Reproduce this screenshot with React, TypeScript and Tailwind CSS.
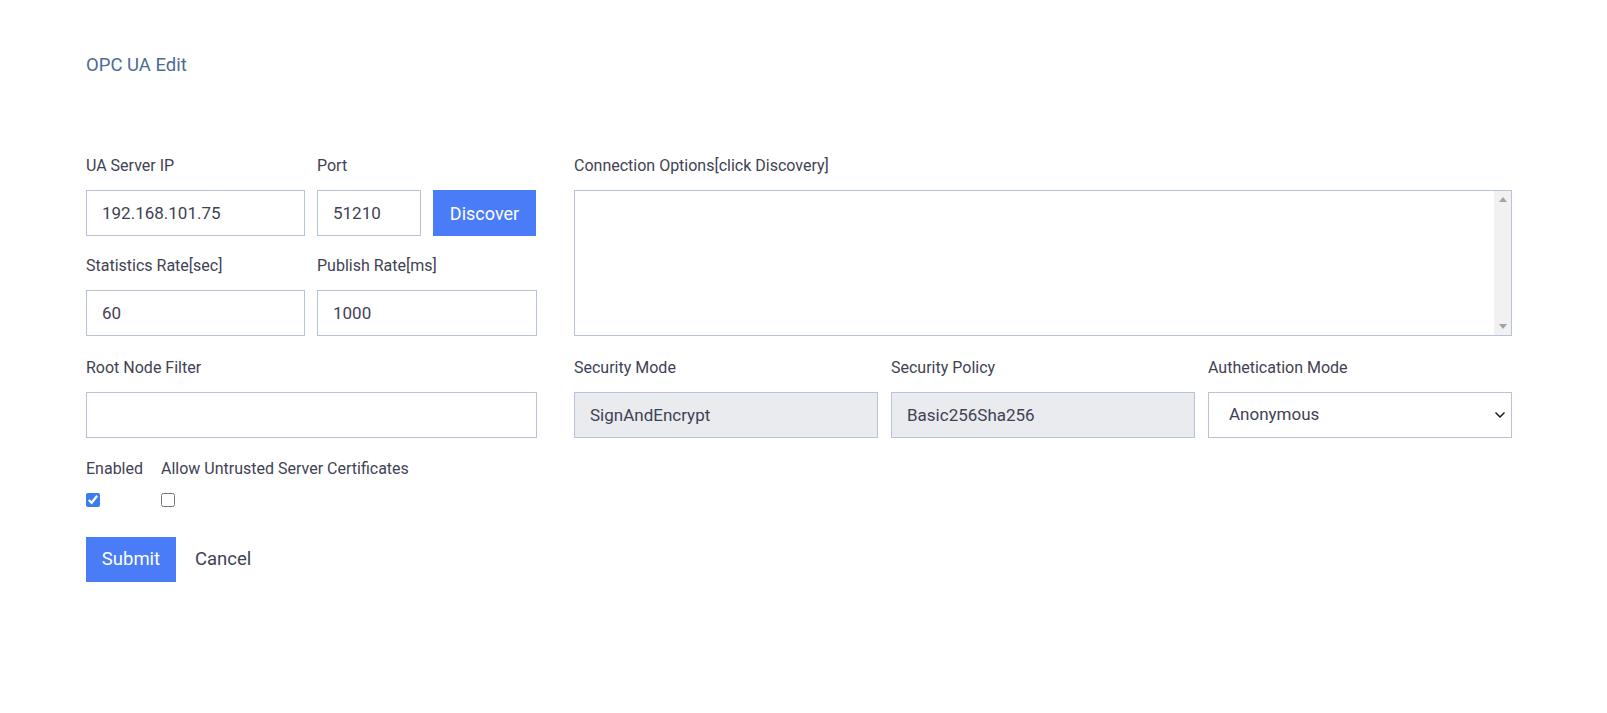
import { ChevronDown } from 'lucide-react'

const font = { fontFamily: 'Roboto, "Liberation Sans", sans-serif' }

const Label = ({ children }: { children: React.ReactNode }) => (
  <label className="block text-[16px] leading-[20px] text-[#3f4254] mb-[14px] whitespace-nowrap">{children}</label>
)

const inputCls =
  'w-full h-[46px] border border-[#b9c2dc] px-[15px] text-[17px] text-[#3f4254] outline-none'

export default function App() {
  return (
    <div className="min-h-[713px] w-full bg-white" style={font}>
      <div className="pl-[86px] pr-[95px] pt-[53px]">
        <h1 className="text-[18.5px] leading-[24px] text-[#4d6a96]">OPC UA Edit</h1>

        <div className="flex gap-[37px] mt-[79px]">
          {/* Left column */}
          <div className="w-[451px] shrink-0">
            <div className="flex gap-[12px]">
              <div className="w-[219px]">
                <Label>UA Server IP</Label>
                <input className={`${inputCls} bg-white`} defaultValue="192.168.101.75" />
              </div>
              <div className="w-[104px]">
                <Label>Port</Label>
                <input className={`${inputCls} bg-white`} defaultValue="51210" />
              </div>
              <div className="flex flex-col justify-end">
                <button className="h-[46px] w-[103px] bg-[#4a7cf7] text-white text-[18px]">Discover</button>
              </div>
            </div>

            <div className="flex gap-[12px] mt-[20px]">
              <div className="w-[219px]">
                <Label>Statistics Rate[sec]</Label>
                <input className={`${inputCls} bg-white`} defaultValue="60" />
              </div>
              <div className="flex-1">
                <Label>Publish Rate[ms]</Label>
                <input className={`${inputCls} bg-white`} defaultValue="1000" />
              </div>
            </div>

            <div className="mt-[22px]">
              <Label>Root Node Filter</Label>
              <input className={`${inputCls} bg-white`} defaultValue="" />
            </div>

            <div className="flex gap-[18px] mt-[21px]">
              <div>
                <Label>Enabled</Label>
                <input type="checkbox" defaultChecked className="block mt-[4px] w-[14px] h-[14px] accent-[#3b7cf0]" />
              </div>
              <div>
                <Label>Allow Untrusted Server Certificates</Label>
                <input type="checkbox" className="block mt-[4px] w-[14px] h-[14px] accent-[#3b7cf0]" />
              </div>
            </div>

            <div className="flex items-center gap-[19px] mt-[30px]">
              <button className="h-[45px] w-[90px] bg-[#4a7cf7] text-white text-[18.5px]">Submit</button>
              <span className="text-[18.5px] text-[#3f4254]">Cancel</span>
            </div>
          </div>

          {/* Right column */}
          <div className="flex-1">
            <Label>Connection Options[click Discovery]</Label>
            <div className="flex h-[146px] border border-[#b9c2dc] bg-white">
              <textarea className="flex-1 h-full resize-none outline-none" />
              <div className="w-[17px] h-full bg-[#f1f1f1] flex flex-col items-center justify-between py-[6px]">
                <svg width="8" height="5" viewBox="0 0 8 5"><path d="M4 0 L8 5 L0 5 Z" fill="#a3a3a3" /></svg>
                <svg width="8" height="5" viewBox="0 0 8 5"><path d="M0 0 L8 0 L4 5 Z" fill="#a3a3a3" /></svg>
              </div>
            </div>

            <div className="grid grid-cols-3 gap-[13px] mt-[22px]">
              <div>
                <Label>Security Mode</Label>
                <input className={`${inputCls} bg-[#e9ebef]`} readOnly defaultValue="SignAndEncrypt" />
              </div>
              <div>
                <Label>Security Policy</Label>
                <input className={`${inputCls} bg-[#e9ebef]`} readOnly defaultValue="Basic256Sha256" />
              </div>
              <div>
                <Label>Authetication Mode</Label>
                <div className="relative">
                  <select className={`${inputCls} bg-white appearance-none pl-[20px]`} defaultValue="Anonymous">
                    <option>Anonymous</option>
                    <option>UserName</option>
                    <option>Certificate</option>
                  </select>
                  <ChevronDown className="absolute right-[4px] top-[15px] w-[16px] h-[16px] text-[#222]" strokeWidth={2.5} />
                </div>
              </div>
            </div>
          </div>
        </div>
      </div>
    </div>
  )
}
